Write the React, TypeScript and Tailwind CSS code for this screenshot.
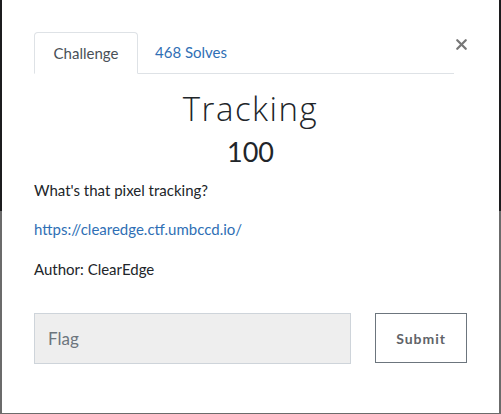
import { X } from 'lucide-react';

export default function App() {
  return (
    <div
      className="w-[501px] h-[414px] px-[2px] pb-[1px] bg-[linear-gradient(to_bottom,#1c1c1e_0px,#1c1c1e_211px,#6b6b6b_211px,#6b6b6b_414px)]"
      style={{ fontFamily: 'Lato, "Noto Sans", sans-serif' }}
    >
      <div className="relative h-[413px] bg-white pt-[32px] px-[32px]">
        {/* Close */}
        <button className="absolute right-[29px] top-[36px] text-[#777] leading-none">
          <X size={17} strokeWidth={3.2} />
        </button>

        {/* Tabs */}
        <div className="flex w-[420px] border-b border-[#dee2e6] h-[42px]">
          <div className="flex items-center justify-center w-[104px] h-[42px] border border-[#dee2e6] border-b-white bg-white rounded-t-[4px] text-[15px] text-[#495057] -mb-px">
            Challenge
          </div>
          <div className="flex items-center px-[17px] text-[15px] text-[#2f6fb5]">
            468 Solves
          </div>
        </div>

        {/* Title */}
        <h1
          className="mt-[15px] text-center text-[33px] leading-[40px] font-light tracking-[1.5px] text-[#212529]"
          style={{ fontFamily: '"Open Sans", Lato, sans-serif' }}
        >
          Tracking
        </h1>
        <div className="text-center text-[27px] leading-[32px] text-[#212529] mt-[7px]">100</div>

        {/* Description */}
        <div className="mt-[11px] text-[15px] leading-[22px] text-[#212529]">
          <p>What's that pixel tracking?</p>
          <p className="mt-[17px]">
            <a className="text-[#2f6fb5]">https://clearedge.ctf.umbccd.io/</a>
          </p>
          <p className="mt-[18px]">Author: ClearEdge</p>
        </div>

        {/* Flag form */}
        <div className="flex mt-[33px] gap-[24px]">
          <div className="w-[318px] h-[51px] bg-[#eeeeee] border border-[#ced4da] flex items-center px-[13px] text-[17px] text-[#6c757d]">
            Flag
          </div>
          <button className="w-[92px] h-[50px] border border-[#6c757d] text-[14px] font-bold tracking-[1px] text-[#5f6368]">
            Submit
          </button>
        </div>
      </div>
    </div>
  );
}
